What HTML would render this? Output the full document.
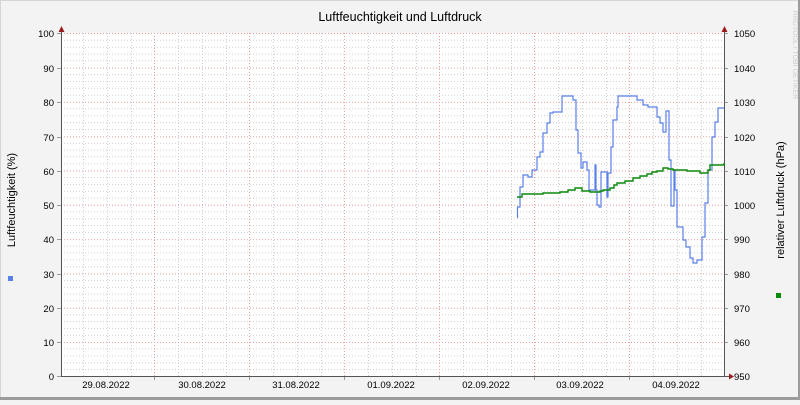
<!DOCTYPE html>
<html><head><meta charset="utf-8"><style>
body{margin:0;width:800px;height:400px;overflow:hidden;background:#f3f3f3}
svg text{font-family:"Liberation Sans","DejaVu Sans",sans-serif;fill:#000}
</style></head><body>
<svg width="800" height="400" xmlns="http://www.w3.org/2000/svg">
<rect x="0" y="0" width="800" height="400" fill="#f3f3f3"/>
<path d="M0.5 399.5V0.5H799.5" stroke="#d6d6d6" fill="none"/>
<path d="M0 398.5H799.5V0" stroke="#9c9c9c" stroke-width="3" fill="none"/>
<rect x="61" y="33" width="663" height="343" fill="#fff"/>
<g stroke="#cfcfcf" stroke-dasharray="1,2" stroke-width="1">
<path d="
M61 369.6H724M61 362.7H724M61 355.9H724M61 349H724
M61 335.3H724M61 328.4H724M61 321.6H724M61 314.7H724
M61 301H724M61 294.1H724M61 287.3H724M61 280.4H724
M61 266.7H724M61 259.8H724M61 253H724M61 246.1H724
M61 232.4H724M61 225.5H724M61 218.7H724M61 211.8H724
M61 198.1H724M61 191.2H724M61 184.4H724M61 177.5H724
M61 163.8H724M61 156.9H724M61 150.1H724M61 143.2H724
M61 129.5H724M61 122.6H724M61 115.8H724M61 108.9H724
M61 95.2H724M61 88.3H724M61 81.5H724M61 74.6H724
M61 60.9H724M61 54H724M61 47.2H724M61 40.3H724"/>
<path d="M83.5 33V376M107.5 33V376M131.5 33V376
M178.5 33V376M202.5 33V376M226.5 33V376
M273.5 33V376M297.5 33V376M321.5 33V376
M368.5 33V376M392.5 33V376M416.5 33V376
M463.5 33V376M487.5 33V376M511.5 33V376
M558.5 33V376M582.5 33V376M606.5 33V376
M653.5 33V376M677.5 33V376M701.5 33V376"/>
</g>
<g stroke="#e8a0a0" stroke-dasharray="1,2" stroke-width="1">
<path d="M61 342.5H724M61 308.2H724M61 273.9H724M61 239.6H724M61 205.3H724M61 171H724M61 136.7H724M61 102.4H724M61 68.1H724M61 33.5H724"/>
<path d="M154.5 33V376M249.5 33V376M344.5 33V376M439.5 33V376M534.5 33V376M629.5 33V376"/>
</g>
<g stroke="#999" stroke-width="1">
<path d="M57 376.5H61M57 342.5H61M57 308.5H61M57 274.5H61M57 239.5H61M57 205.5H61M57 171.5H61M57 137.5H61M57 102.5H61M57 68.5H61M57 33.5H61"/>
<path d="M724 376.5H728M724 342.5H728M724 308.5H728M724 274.5H728M724 239.5H728M724 205.5H728M724 171.5H728M724 137.5H728M724 102.5H728M724 68.5H728M724 33.5H728"/>
<path d="M154.5 376V380M249.5 376V380M344.5 376V380M439.5 376V380M534.5 376V380M629.5 376V380"/>
</g>
<path d="M61.5 30V376.5H730M724.5 30V376.5" stroke="#555" stroke-width="1" fill="none"/>
<path d="M58.5 32L61.5 26L64.5 32Z M721.5 32L724.5 26L727.5 32Z M729 373.5L734 376.5L729 379.5Z" fill="#9b1c1c"/>
<path fill="none" stroke="#5b7fe8" stroke-width="1.2" d="M517.5 218V207H520V187H523V175H528V177H532V170H537V157H540V152H543V133H547V123H550V113H553V112H557V112H562V96H563V96H573V100H576V130H578V153H581V168H583V162H587V170H589V190H592V190H595V165H596V190H597V205H599V207H601V172H603V172H607V197H608V173H611V147H613V120H617V107H618V96H622V96H637V100H643V105H648V107H657V117H660V123H663V132H666V111H667V111H669V160H671V206H672V206H674V170H675V190H677V227H680V227H683V240H686V247H690V258H693V263H697V260H702V237H705V203H708V170H712V137H715V122H718V108H722V108H724"/>
<path fill="none" stroke="#0a8a0a" stroke-width="1.4" d="M517 197H522V194H543V193H560V192H568V190H575V188H582V191H590V192H600V191H603V190H610V188H614V185H617V183H625V181H633V178H640V176H647V174H652V172H657V171H663V168H668V169H673V170H687V171H700V173H708V170H710V165H724V163"/>
<text x="400" y="21" font-size="12.5" text-anchor="middle">Luftfeuchtigkeit und Luftdruck</text>
<g font-size="9.5" text-anchor="end">
<text x="54" y="380">0</text><text x="54" y="346">10</text><text x="54" y="312">20</text><text x="54" y="278">30</text><text x="54" y="243">40</text><text x="54" y="209">50</text><text x="54" y="175">60</text><text x="54" y="141">70</text><text x="54" y="106">80</text><text x="54" y="72">90</text><text x="54" y="37">100</text>
</g>
<g font-size="9.5">
<text x="734" y="380">950</text><text x="734" y="346">960</text><text x="734" y="312">970</text><text x="734" y="278">980</text><text x="734" y="243">990</text><text x="734" y="209">1000</text><text x="734" y="175">1010</text><text x="734" y="141">1020</text><text x="734" y="106">1030</text><text x="734" y="72">1040</text><text x="734" y="37">1050</text>
</g>
<g font-size="9.5" text-anchor="middle">
<text x="106" y="388">29.08.2022</text><text x="202" y="388">30.08.2022</text><text x="296" y="388">31.08.2022</text><text x="391" y="388">01.09.2022</text><text x="486" y="388">02.09.2022</text><text x="580" y="388">03.09.2022</text><text x="676" y="388">04.09.2022</text>
</g>
<text font-size="11" text-anchor="middle" transform="translate(15,200) rotate(-90)">Luftfeuchtigkeit (%)</text>
<text font-size="11" text-anchor="middle" transform="translate(784,200) rotate(-90)">relativer Luftdruck (hPa)</text>
<text font-size="7" text-anchor="middle" style="fill:#ccc" transform="translate(793,55) rotate(90)">RRDTOOL / TOBI OETIKER</text>
<rect x="8" y="276" width="5" height="5" fill="#5b7fe8"/>
<rect x="776" y="293" width="5" height="5" fill="#0a8a0a"/>
</svg>
</body></html>
